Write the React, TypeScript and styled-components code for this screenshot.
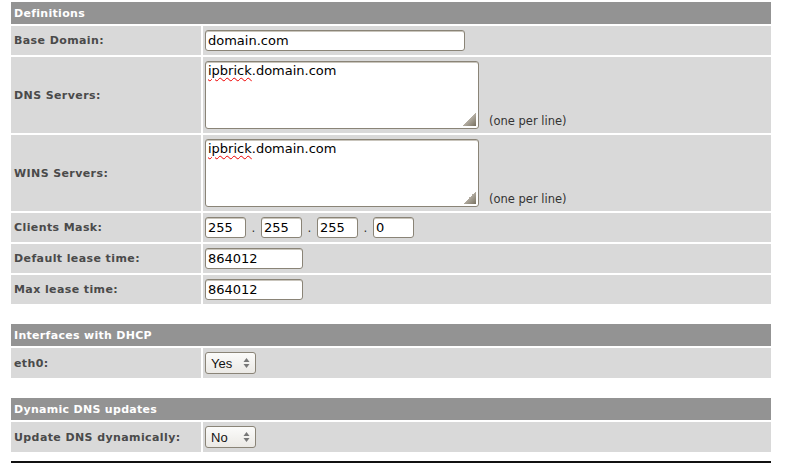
import React from 'react';
import styled, { createGlobalStyle } from 'styled-components';

const GlobalStyle = createGlobalStyle`
    body {
        margin: 0;
        background: #fff;
        font-family: 'DejaVu Sans', Verdana, sans-serif;
    }
`;

const Page = styled.div`
    width: 760px;
    padding: 2px 14px 0 11px;
`;

const Section = styled.section`
    display: grid;
    grid-template-columns: 190px 1fr;
    gap: 2px;
    margin-bottom: 20px;
`;

const Header = styled.div`
    grid-column: 1 / -1;
    height: 22px;
    display: flex;
    align-items: center;
    padding: 0 3px;
    background: #939393;
    color: #fff;
    font-size: 11px;
    font-weight: bold;
    letter-spacing: 0.3px;
`;

const Label = styled.div`
    display: flex;
    align-items: center;
    padding-left: 3px;
    background: #d9d9d9;
    color: #4a4a4a;
    font-size: 11px;
    font-weight: bold;
    letter-spacing: 0.4px;
`;

const Value = styled.div<{ $tall?: boolean }>`
    display: flex;
    align-items: ${p => (p.$tall ? 'flex-end' : 'center')};
    padding: 4px 2px;
    background: #d9d9d9;
`;

const Field = styled.input<{ $width: number }>`
    box-sizing: border-box;
    width: ${p => p.$width}px;
    height: 21px;
    padding: 0 2px;
    border: 1px solid #8a8477;
    border-radius: 3px;
    box-shadow: inset 0 1px 0 #c9c5bc;
    background: #fff;
    font-family: 'DejaVu Sans', Verdana, sans-serif;
    font-size: 13px;
    color: #000;
    outline: none;
`;

const TextBox = styled.div`
    position: relative;
    box-sizing: border-box;
    width: 274px;
    height: 68px;
    padding: 1px 2px;
    border: 1px solid #8a8477;
    border-radius: 3px;
    box-shadow: inset 0 1px 0 #c9c5bc;
    background: #fff;
    font-size: 13px;
    color: #000;
`;

const Misspelt = styled.span`
    text-decoration: underline wavy #e00;
    text-decoration-thickness: 1px;
    text-underline-offset: 2px;
`;

const Grip = styled.span`
    position: absolute;
    right: 2px;
    bottom: 2px;
    width: 13px;
    height: 13px;
    background: linear-gradient(135deg, transparent 50%, #b3ada2 50%, #77705f 100%);
`;

const Hint = styled.span`
    margin-left: 10px;
    margin-bottom: 1px;
    font-size: 11.5px;
    color: #333;
`;

const Dot = styled.span`
    width: 15px;
    text-align: center;
    font-size: 12px;
    color: #333;
`;

const SelectWrap = styled.div`
    position: relative;
    display: inline-flex;
`;

const Select = styled.select`
    appearance: none;
    box-sizing: border-box;
    width: 51px;
    height: 22px;
    padding: 0 0 0 5px;
    border: 1px solid #8a8477;
    border-radius: 3px;
    background: linear-gradient(#fbfbfa, #ebe9e5);
    font-family: 'Liberation Sans', Arial, sans-serif;
    font-size: 13px;
    color: #111;
    outline: none;
`;

const Arrows = styled.svg`
    position: absolute;
    right: 6px;
    top: 5px;
    pointer-events: none;
`;

const Rule = styled.hr`
    margin: -11px 0 0;
    border: none;
    height: 2px;
    background: #111;
`;

const Chooser = ({ value }: { value: string }) => (
    <SelectWrap>
        <Select defaultValue={value}>
            <option>Yes</option>
            <option>No</option>
        </Select>
        <Arrows width="7" height="12" viewBox="0 0 7 12">
            <path d="M3.5 1 L6.5 5 L0.5 5 Z" fill="#777" />
            <path d="M3.5 11 L6.5 7 L0.5 7 Z" fill="#777" />
        </Arrows>
    </SelectWrap>
);

const Servers = () => (
    <>
        <TextBox role="textbox" aria-multiline="true">
            <Misspelt>ipbrick</Misspelt>.domain.com
            <Grip />
        </TextBox>
        <Hint>(one per line)</Hint>
    </>
);

const App = () => {
    const mask = ['255', '255', '255', '0'];
    return (
        <Page>
            <GlobalStyle />
            <Section>
                <Header>Definitions</Header>
                <Label>Base Domain:</Label>
                <Value><Field $width={260} defaultValue="domain.com" /></Value>
                <Label>DNS Servers:</Label>
                <Value $tall><Servers /></Value>
                <Label>WINS Servers:</Label>
                <Value $tall><Servers /></Value>
                <Label>Clients Mask:</Label>
                <Value>
                    {mask.map((m, i) => (
                        <React.Fragment key={i}>
                            {i > 0 && <Dot>.</Dot>}
                            <Field $width={41} defaultValue={m} />
                        </React.Fragment>
                    ))}
                </Value>
                <Label>Default lease time:</Label>
                <Value><Field $width={98} defaultValue="864012" /></Value>
                <Label>Max lease time:</Label>
                <Value><Field $width={98} defaultValue="864012" /></Value>
            </Section>
            <Section>
                <Header>Interfaces with DHCP</Header>
                <Label>eth0:</Label>
                <Value><Chooser value="Yes" /></Value>
            </Section>
            <Section>
                <Header>Dynamic DNS updates</Header>
                <Label>Update DNS dynamically:</Label>
                <Value><Chooser value="No" /></Value>
            </Section>
            <Rule />
        </Page>
    );
};

export default App;
